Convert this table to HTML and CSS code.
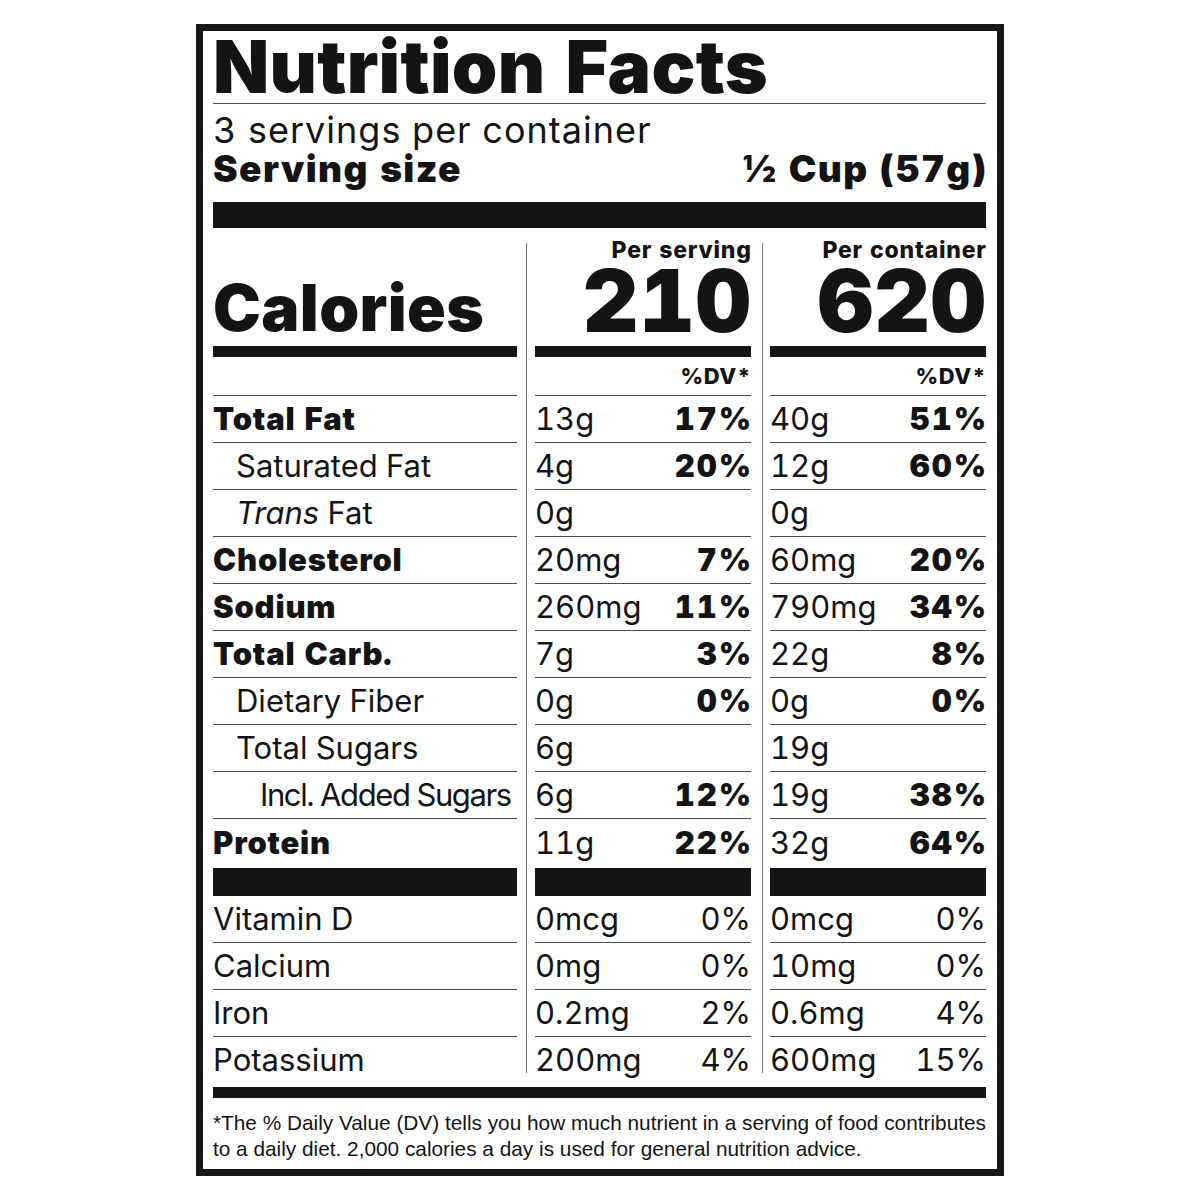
FILE: index.html
```html
<!DOCTYPE html>
<html lang="en">
<head>
<meta charset="utf-8">
<title>Nutrition Facts</title>
<link rel="stylesheet" href="styles.css">
</head>
<body>
<div class="label">
  <div class="title">Nutrition Facts</div>
  <div class="servings">3 servings per container</div>
  <div class="size"><span>Serving size</span><span>½ Cup (57g)</span></div>
  <div class="bar-top"></div>

  <div class="facts">
    <div class="vsep vsep1"></div>
    <div class="vsep vsep2"></div>

    <div class="cal-label"><span>Calories</span></div>
    <div class="cal-val"><span class="per">Per serving</span><span class="num">210</span></div>
    <div class="cal-val"><span class="per">Per container</span><span class="num">620</span></div>

    <div class="bar-mid"></div>
    <div class="bar-mid"></div>
    <div class="bar-mid"></div>

    <div class="dv"></div>
    <div class="dv"><span>%DV*</span></div>
    <div class="dv"><span>%DV*</span></div>

    <div class="row b">Total Fat</div>
    <div class="row val"><span>13g</span><b>17%</b></div>
    <div class="row val"><span>40g</span><b>51%</b></div>

    <div class="row i1">Saturated Fat</div>
    <div class="row val"><span>4g</span><b>20%</b></div>
    <div class="row val"><span>12g</span><b>60%</b></div>

    <div class="row i1"><em>Trans</em> Fat</div>
    <div class="row val"><span>0g</span></div>
    <div class="row val"><span>0g</span></div>

    <div class="row b">Cholesterol</div>
    <div class="row val"><span>20mg</span><b>7%</b></div>
    <div class="row val"><span>60mg</span><b>20%</b></div>

    <div class="row b">Sodium</div>
    <div class="row val"><span>260mg</span><b>11%</b></div>
    <div class="row val"><span>790mg</span><b>34%</b></div>

    <div class="row b">Total Carb.</div>
    <div class="row val"><span>7g</span><b>3%</b></div>
    <div class="row val"><span>22g</span><b>8%</b></div>

    <div class="row i1">Dietary Fiber</div>
    <div class="row val"><span>0g</span><b>0%</b></div>
    <div class="row val"><span>0g</span><b>0%</b></div>

    <div class="row i1">Total Sugars</div>
    <div class="row val"><span>6g</span></div>
    <div class="row val"><span>19g</span></div>

    <div class="row i2">Incl. Added Sugars</div>
    <div class="row val"><span>6g</span><b>12%</b></div>
    <div class="row val"><span>19g</span><b>38%</b></div>

    <div class="row last b">Protein</div>
    <div class="row last val"><span>11g</span><b>22%</b></div>
    <div class="row last val"><span>32g</span><b>64%</b></div>

    <div class="bar-thick"></div>
    <div class="bar-thick"></div>
    <div class="bar-thick"></div>

    <div class="row">Vitamin D</div>
    <div class="row val"><span>0mcg</span><span>0%</span></div>
    <div class="row val"><span>0mcg</span><span>0%</span></div>

    <div class="row">Calcium</div>
    <div class="row val"><span>0mg</span><span>0%</span></div>
    <div class="row val"><span>10mg</span><span>0%</span></div>

    <div class="row">Iron</div>
    <div class="row val"><span>0.2mg</span><span>2%</span></div>
    <div class="row val"><span>0.6mg</span><span>4%</span></div>

    <div class="row end">Potassium</div>
    <div class="row end val"><span>200mg</span><span>4%</span></div>
    <div class="row end val"><span>600mg</span><span>15%</span></div>
  </div>

  <div class="bar-bottom"></div>
  <p class="note">*The % Daily Value (DV) tells you how much nutrient in a serving of food contributes<br>to a daily diet. 2,000 calories a day is used for general nutrition advice.</p>
</div>
</body>
</html>
```

FILE: styles.css
```css
* { box-sizing: border-box; }

body {
  margin: 0;
  background: #ffffff;
  color: #141414;
  font-family: Inter, "Liberation Sans", sans-serif;
  font-variant-numeric: tabular-nums;
}

.label {
  margin: 24px 0 0 196px;
  width: 808px;
  height: 1152px;
  border: 7px solid #161616;
  padding: 0 11px 0 10px;
  background: #fff;
}

.title {
  height: 73px;
  line-height: 72px;
  font-size: 73px;
  font-weight: 900;
  letter-spacing: 0.3px;
  border-bottom: 1px solid #555;
  white-space: nowrap;
}

.servings {
  padding-top: 7px;
  line-height: 38px;
  font-size: 36px;
  font-weight: 400;
  letter-spacing: 1px;
}

.size {
  display: flex;
  justify-content: space-between;
  line-height: 40px;
  font-size: 37px;
  font-weight: 900;
  letter-spacing: 1.4px;
  margin-right: -1.4px;
}

.bar-top {
  margin-top: 13px;
  height: 26px;
  background: #151515;
}

.facts {
  margin-top: 15px;
  display: grid;
  grid-template-columns: 304px 18px 216px 19px 216px;
}

.vsep {
  grid-row: 1 / 19;
  width: 1px;
  background: #7a7a7a;
}
.vsep1 { grid-column: 2; margin-left: 9px; }
.vsep2 { grid-column: 4; margin-left: 11px; }

.cal-label {
  height: 103px;
  display: flex;
  align-items: flex-end;
  padding-bottom: 6px;
  font-size: 64px;
  line-height: 64px;
  font-weight: 900;
  letter-spacing: 0.4px;
}

.cal-val {
  height: 103px;
  display: flex;
  flex-direction: column;
  align-items: flex-end;
}
.cal-val .per {
  margin-top: -4px;
  font-size: 23px;
  line-height: 22px;
  font-weight: 800;
  letter-spacing: 0.8px;
  margin-right: -0.8px;
}
.cal-val .num {
  font-size: 86px;
  line-height: 80px;
  font-weight: 900;
  letter-spacing: 1px;
  margin-right: -1px;
}

.bar-mid {
  height: 11px;
  background: #151515;
}

.dv {
  height: 39px;
  line-height: 38px;
  border-bottom: 1px solid #4a4a4a;
  text-align: right;
  font-size: 22px;
  font-weight: 800;
}
.dv span {
  letter-spacing: 0.6px;
  margin-right: -0.6px;
}

.row {
  height: 47px;
  line-height: 46px;
  border-bottom: 1px solid #4a4a4a;
  font-size: 31px;
  font-weight: 400;
  white-space: nowrap;
}
.row.b {
  font-weight: 900;
  letter-spacing: 0.8px;
}
.row.i1 { padding-left: 23px; }
.row.i2 {
  padding-left: 47px;
  letter-spacing: -1.4px;
}
.row em { font-style: italic; }
.row.val {
  display: flex;
  justify-content: space-between;
  letter-spacing: 0;
}
.row.val b {
  font-weight: 900;
  letter-spacing: 2px;
  margin-right: -2px;
}
.row.last {
  height: 49px;
  line-height: 47px;
  border-bottom: none;
}
.row.end {
  height: 36px;
  border-bottom: none;
}

.bar-thick {
  height: 28px;
  background: #151515;
}

.bar-bottom {
  margin-top: 14px;
  height: 11px;
  background: #151515;
}

.note {
  margin: 12px 0 0;
  font-family: "Liberation Sans", sans-serif;
  font-size: 20.8px;
  line-height: 26px;
  white-space: nowrap;
}
```
